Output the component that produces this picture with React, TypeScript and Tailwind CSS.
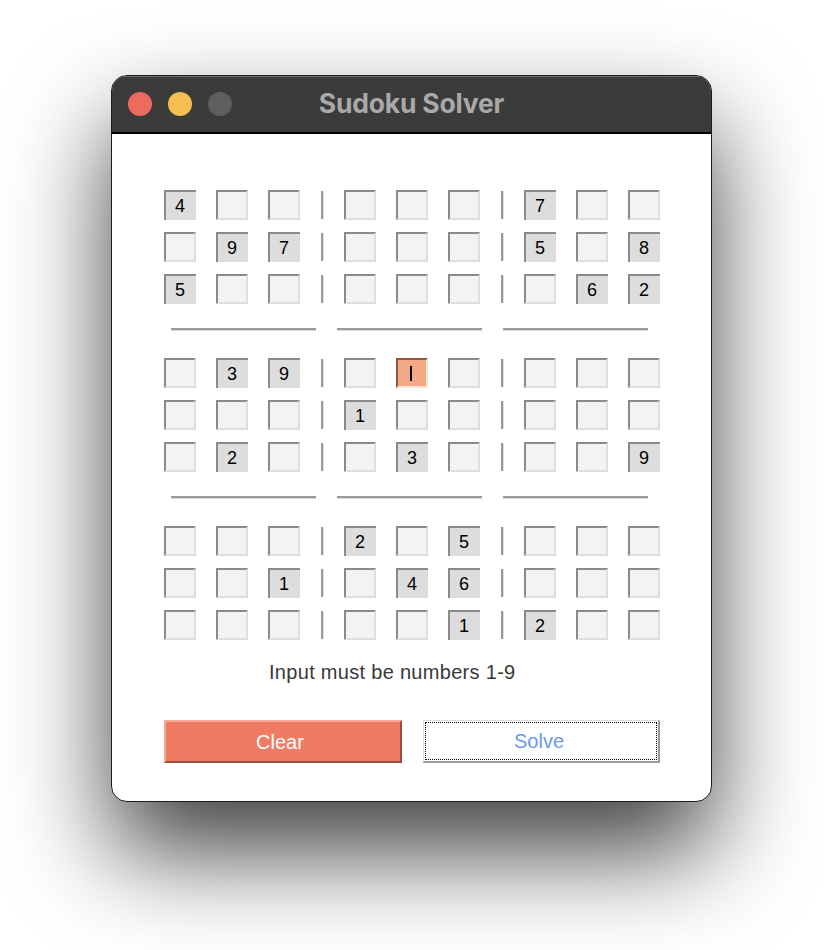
import React from 'react';

const board: string[][] = [
  ['4', '', '', '', '', '', '7', '', ''],
  ['', '9', '7', '', '', '', '5', '', '8'],
  ['5', '', '', '', '', '', '', '6', '2'],
  ['', '3', '9', '', '*', '', '', '', ''],
  ['', '', '', '1', '', '', '', '', ''],
  ['', '2', '', '', '3', '', '', '', '9'],
  ['', '', '', '2', '', '5', '', '', ''],
  ['', '', '1', '', '4', '6', '', '', ''],
  ['', '', '', '', '', '1', '2', '', ''],
];

const Cell: React.FC<{ value: string }> = ({ value }) => {
  if (value === '*') {
    return (
      <div className="w-[32px] h-[30px] border-t-2 border-l-2 border-b-2 border-r-2 border-t-[#8d5a46] border-l-[#8d5a46] border-b-[#fde3c9] border-r-[#fde3c9] bg-[#f3a887] flex items-center justify-center">
        <div className="w-[2px] h-[15px] bg-black mr-[2px]" />
      </div>
    );
  }
  if (value) {
    return (
      <div className="w-[32px] h-[30px] border-t-2 border-l-2 border-[#8a8a8a] bg-[#dddddd] flex items-center justify-center text-[18px] text-black leading-none pr-[2px]">
        {value}
      </div>
    );
  }
  return (
    <div className="w-[32px] h-[30px] border-t-2 border-l-2 border-b-2 border-r-2 border-t-[#8a8a8a] border-l-[#8a8a8a] border-b-[#dedede] border-r-[#dedede] bg-[#f3f3f3]" />
  );
};

const VSep = () => (
  <div className="ml-[21px] mr-[20px] h-[28px] flex">
    <div className="w-[2px] h-full bg-[#9a9a9a]" />
    <div className="w-[1px] h-full bg-[#dcdcdc]" />
  </div>
);

const HSep = () => (
  <div className="flex gap-[21px] ml-[7px] mt-[24px] mb-[27px]">
    {[0, 1, 2].map((i) => (
      <div key={i} className="w-[145px] flex flex-col">
        <div className="h-[2px] bg-[#9a9a9a]" />
        <div className="h-[1px] bg-[#dcdcdc]" />
      </div>
    ))}
  </div>
);

const Row: React.FC<{ values: string[] }> = ({ values }) => (
  <div className="flex items-center">
    {values.map((v, i) => (
      <React.Fragment key={i}>
        <Cell value={v} />
        {i === 2 || i === 5 ? <VSep /> : i < 8 ? <div className="w-[20px]" /> : null}
      </React.Fragment>
    ))}
  </div>
);

export default function App() {
  return (
    <div className="w-[824px] h-[950px] bg-white overflow-hidden font-['Liberation_Sans',Arial,sans-serif]">
      <div className="ml-[111px] mt-[75px] w-[601px] h-[727px] rounded-[16px] border border-[#1c1c1c] bg-white overflow-hidden flex flex-col shadow-[0_50px_100px_rgba(0,0,0,0.75)]">
        {/* title bar */}
        <div className="h-[58px] shrink-0 bg-[#3b3b3b] border-b-2 border-black shadow-[inset_0_1px_0_#707070] relative flex items-center">
          <div className="flex gap-[16px] ml-[16px]">
            <div className="w-[24px] h-[24px] rounded-full bg-[#ec6a5e]" />
            <div className="w-[24px] h-[24px] rounded-full bg-[#f4bf4f]" />
            <div className="w-[24px] h-[24px] rounded-full bg-[#5f5f5f]" />
          </div>
          <div className="absolute inset-0 flex items-center justify-center text-[26.5px] font-bold text-[#a9a9a9] font-['Inter',sans-serif] tracking-[-0.2px]">
            Sudoku Solver
          </div>
        </div>

        {/* content */}
        <div className="flex flex-col pl-[52px] pt-[56px]">
          {[0, 1, 2].map((b) => (
            <React.Fragment key={b}>
              <div className="flex flex-col gap-[12px]">
                {board.slice(b * 3, b * 3 + 3).map((r, i) => (
                  <Row key={i} values={r} />
                ))}
              </div>
              {b < 2 && <HSep />}
            </React.Fragment>
          ))}

          <div className="mt-[21px] ml-[105px] text-[20px] leading-[22px] text-[#383838] tracking-[0.3px]">
            Input must be numbers 1-9
          </div>

          <div className="mt-[37px] flex gap-[21px]">
            <div className="w-[238px] h-[43px] bg-[#ef7c62] border-t-2 border-l-2 border-b-2 border-r-2 border-t-[#f6aa99] border-l-[#f6aa99] border-b-[#97503f] border-r-[#97503f] flex items-center justify-center text-white text-[20px] pr-[6px]">
              Clear
            </div>
            <div className="w-[237px] h-[43px] bg-white border-t border-l border-b-2 border-r-2 border-t-[#d8d8d8] border-l-[#d8d8d8] border-b-[#9a9a9a] border-r-[#9a9a9a] p-[1px]">
              <div className="w-full h-full border border-dotted border-black flex items-center justify-center text-[#6b99ef] text-[20px] pr-[4px]">
                Solve
              </div>
            </div>
          </div>
        </div>
      </div>
    </div>
  );
}
